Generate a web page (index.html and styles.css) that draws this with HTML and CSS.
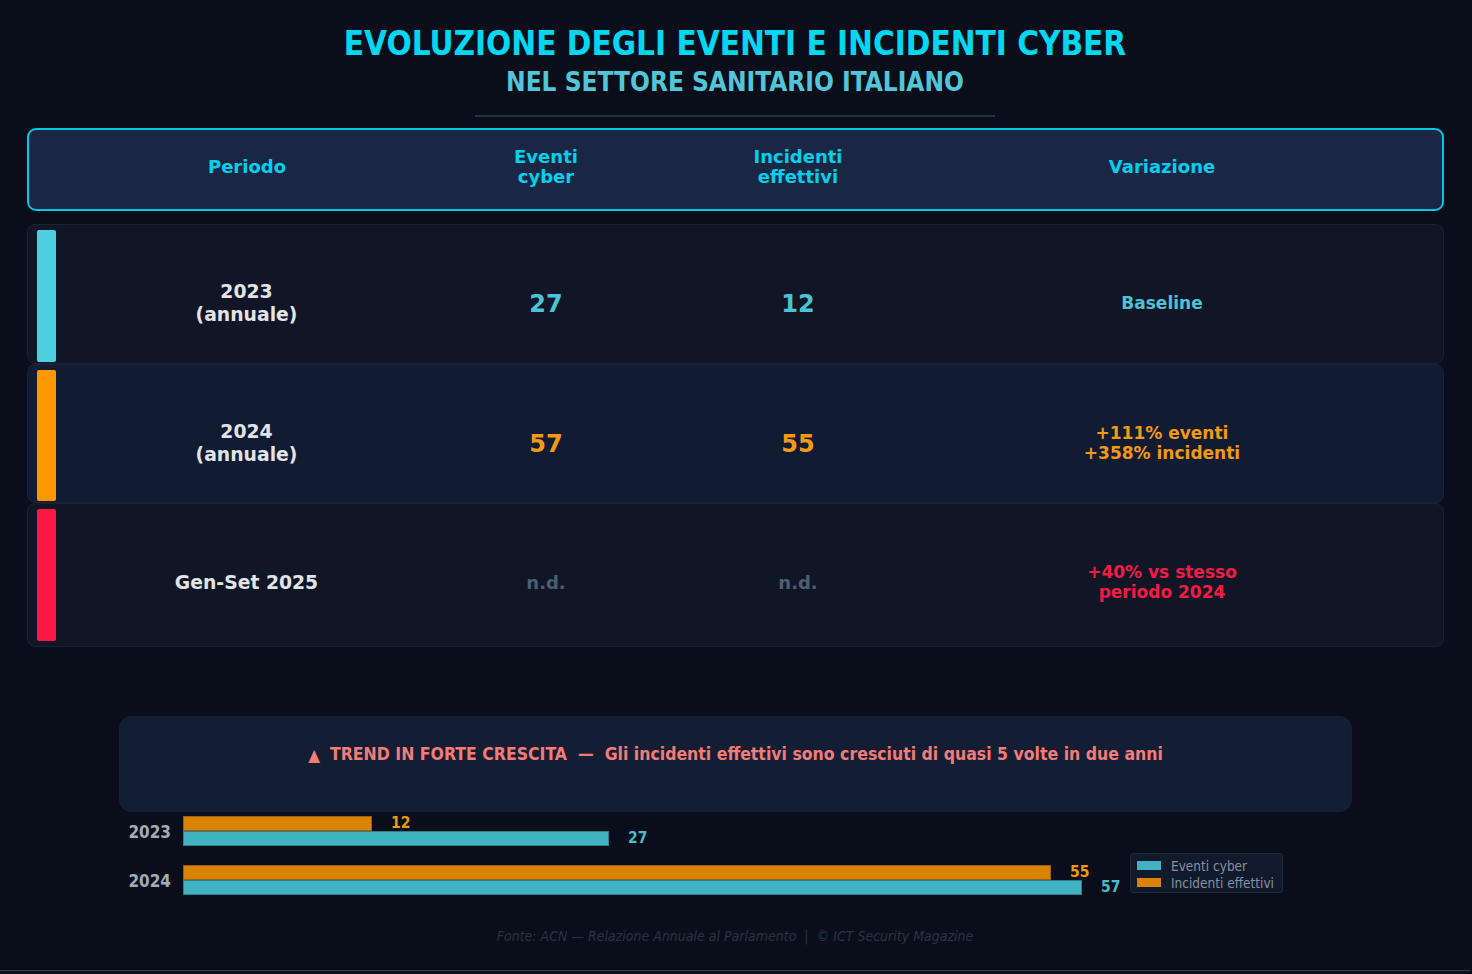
FILE: index.html
```html
<!DOCTYPE html>
<html lang="it">
<head>
<meta charset="utf-8">
<title>Evoluzione degli eventi e incidenti cyber</title>
<link rel="stylesheet" href="styles.css">
</head>
<body>
<div class="page">
  <header class="hero">
    <h1 class="title">EVOLUZIONE DEGLI EVENTI E INCIDENTI CYBER</h1>
    <h2 class="subtitle">NEL SETTORE SANITARIO ITALIANO</h2>
    <div class="rule"></div>
  </header>

  <section class="table">
    <div class="thead">
      <div class="cell c1">Periodo</div>
      <div class="cell c2">Eventi<br>cyber</div>
      <div class="cell c3">Incidenti<br>effettivi</div>
      <div class="cell c4">Variazione</div>
    </div>

    <div class="row row-a">
      <div class="accent accent-cyan"></div>
      <div class="cell c1 period">2023<br>(annuale)</div>
      <div class="cell c2 num cyan">27</div>
      <div class="cell c3 num cyan">12</div>
      <div class="cell c4 var cyan">Baseline</div>
    </div>

    <div class="row row-b">
      <div class="accent accent-orange"></div>
      <div class="cell c1 period">2024<br>(annuale)</div>
      <div class="cell c2 num orange">57</div>
      <div class="cell c3 num orange">55</div>
      <div class="cell c4 var orange">+111% eventi<br>+358% incidenti</div>
    </div>

    <div class="row row-a row-last">
      <div class="accent accent-red"></div>
      <div class="cell c1 period">Gen-Set 2025</div>
      <div class="cell c2 num-nd">n.d.</div>
      <div class="cell c3 num-nd">n.d.</div>
      <div class="cell c4 var red">+40% vs stesso<br>periodo 2024</div>
    </div>
  </section>

  <section class="trend">
    <span class="tri">▲</span><span class="trend-text">TREND IN FORTE CRESCITA&nbsp; —&nbsp; Gli incidenti effettivi sono cresciuti di quasi 5 volte in due anni</span>
  </section>

  <section class="chart">
    <div class="group">
      <div class="year">2023</div>
      <div class="bars">
        <div class="bar-row"><div class="bar bar-orange" style="width:189px"></div><span class="val val-orange">12</span></div>
        <div class="bar-row"><div class="bar bar-cyan" style="width:426px"></div><span class="val val-cyan">27</span></div>
      </div>
    </div>
    <div class="group">
      <div class="year">2024</div>
      <div class="bars">
        <div class="bar-row"><div class="bar bar-orange" style="width:868px"></div><span class="val val-orange">55</span></div>
        <div class="bar-row"><div class="bar bar-cyan" style="width:899px"></div><span class="val val-cyan">57</span></div>
      </div>
    </div>
    <div class="legend">
      <div class="legend-item"><span class="sw sw-cyan"></span>Eventi cyber</div>
      <div class="legend-item"><span class="sw sw-orange"></span>Incidenti effettivi</div>
    </div>
  </section>

  <footer class="source">Fonte: ACN — Relazione Annuale al Parlamento &nbsp;|&nbsp; © ICT Security Magazine</footer>
</div>
</body>
</html>
```

FILE: styles.css
```css
html, body {
  margin: 0;
  padding: 0;
  background: #0a0e1a;
}
body {
  width: 1472px;
  height: 974px;
  overflow: hidden;
  font-family: "DejaVu Sans", "Liberation Sans", sans-serif;
}
.page {
  width: 1470px;
  height: 970px;
  background: #0a0e1a;
  border-bottom: 1px solid #3a3f49;
  display: flex;
  flex-direction: column;
}
.hero {
  display: flex;
  flex-direction: column;
  align-items: center;
  padding-top: 25px;
}
.title {
  margin: 0;
  font-family: "DejaVu Sans Condensed", "DejaVu Sans", sans-serif;
  font-stretch: condensed;
  font-weight: bold;
  font-size: 33px;
  line-height: 38px;
  color: #00d8f2;
}
.subtitle {
  margin: 4px 0 0;
  font-family: "DejaVu Sans Condensed", "DejaVu Sans", sans-serif;
  font-stretch: condensed;
  font-weight: bold;
  font-size: 26px;
  line-height: 30px;
  color: #52c6d8;
}
.rule {
  width: 520px;
  height: 2px;
  margin-top: 18px;
  background: #1d3444;
}

.table {
  margin: 11px 0 0 27px;
  width: 1417px;
  display: flex;
  flex-direction: column;
}
.thead {
  box-sizing: border-box;
  height: 83px;
  border: 2.5px solid #00c8e2;
  border-radius: 9px;
  background: #1a2744;
  display: grid;
  grid-template-columns: 436px 162px 342px 386px 1fr;
  align-items: center;
  padding-bottom: 5px;
  margin-bottom: 13px;
}
.thead .cell {
  font-weight: bold;
  font-size: 18px;
  line-height: 20px;
  color: #00d0ee;
  text-align: center;
}

.row {
  position: relative;
  box-sizing: border-box;
  height: 140px;
  border: 1px solid #182136;
  border-radius: 8px;
  display: grid;
  grid-template-columns: 437px 162px 342px 386px 1fr;
  align-items: center;
  padding: 6px 0 2px;
}
.row-a { background: #111627; }
.row-b { background: #111c33; height: 139px; }
.row-last { height: 144px; padding-bottom: 6px; }
.row .accent {
  position: absolute;
  left: 9px;
  top: 5px;
  bottom: 1px;
  width: 19px;
  border-radius: 2px;
}
.row-last .accent { bottom: 5px; }
.accent-cyan { background: #4dd0e1; }
.accent-orange { background: #ff9800; }
.accent-red { background: #ff1744; }

.row .cell {
  text-align: center;
  font-weight: bold;
  padding-top: 14px;
}
.period {
  font-size: 18.8px;
  line-height: 23px;
  color: #e2e4e8;
}
.num {
  font-size: 24px;
  line-height: 28px;
  padding-top: 16px !important;
}
.num-nd {
  font-size: 18px;
  line-height: 23px;
  color: #4b5f70;
}
.var {
  font-size: 17px;
  line-height: 20px;
}
.cyan { color: #4cc3d6; }
.orange { color: #f39a12; }
.red { color: #f21b45; }

.trend {
  margin: 69px 0 0 119px;
  width: 1233px;
  height: 96px;
  box-sizing: border-box;
  border-radius: 12px;
  background: #131d33;
  border: 1px solid #151f36;
  display: flex;
  justify-content: center;
  align-items: flex-start;
  padding-top: 27px;
  font-family: "DejaVu Sans Condensed", "DejaVu Sans", sans-serif;
  font-stretch: condensed;
  font-weight: bold;
  font-size: 17.5px;
  line-height: 20px;
  color: #f47c78;
}
.tri {
  font-size: 17px;
  line-height: 20px;
  margin-right: 10px;
  padding-top: 1px;
}

.chart {
  position: relative;
  margin-top: 4px;
  display: flex;
  flex-direction: column;
  gap: 19px;
  font-family: "DejaVu Sans Condensed", "DejaVu Sans", sans-serif;
  font-stretch: condensed;
  font-weight: bold;
}
.group {
  display: flex;
  align-items: center;
}
.year {
  width: 171px;
  text-align: right;
  margin-right: 12px;
  font-size: 17px;
  color: #a3abb6;
  padding-top: 2px;
}
.bars {
  display: flex;
  flex-direction: column;
}
.bar-row {
  display: flex;
  align-items: center;
  height: 15px;
}
.bar {
  height: 15px;
  box-sizing: border-box;
}
.bar-orange { background: #d98300; border: 1px solid #9a6010; }
.bar-cyan { background: #42b2c2; border: 1px solid #2d7f8c; }
.val {
  margin-left: 19px;
  font-size: 15.5px;
  line-height: 15px;
}
.val-orange { color: #ee9a10; }
.val-cyan { color: #48bccb; }

.legend {
  position: absolute;
  left: 1130px;
  top: 37px;
  width: 153px;
  height: 40px;
  box-sizing: border-box;
  background: #111a2b;
  border: 1px solid #1e2a3d;
  border-radius: 3px;
  padding: 3px 0 0 6px;
  font-weight: normal;
  font-size: 13.5px;
  color: #8492a2;
}
.legend-item {
  display: flex;
  align-items: center;
  height: 17px;
}
.sw {
  width: 24px;
  height: 9px;
  margin-right: 10px;
}
.sw-cyan { background: #42b2c2; }
.sw-orange { background: #d98300; }

.source {
  margin-top: 33px;
  text-align: center;
  font-family: "DejaVu Sans Condensed", "DejaVu Sans", sans-serif;
  font-stretch: condensed;
  font-style: italic;
  font-size: 14px;
  line-height: 17px;
  color: #2b3444;
}
```
